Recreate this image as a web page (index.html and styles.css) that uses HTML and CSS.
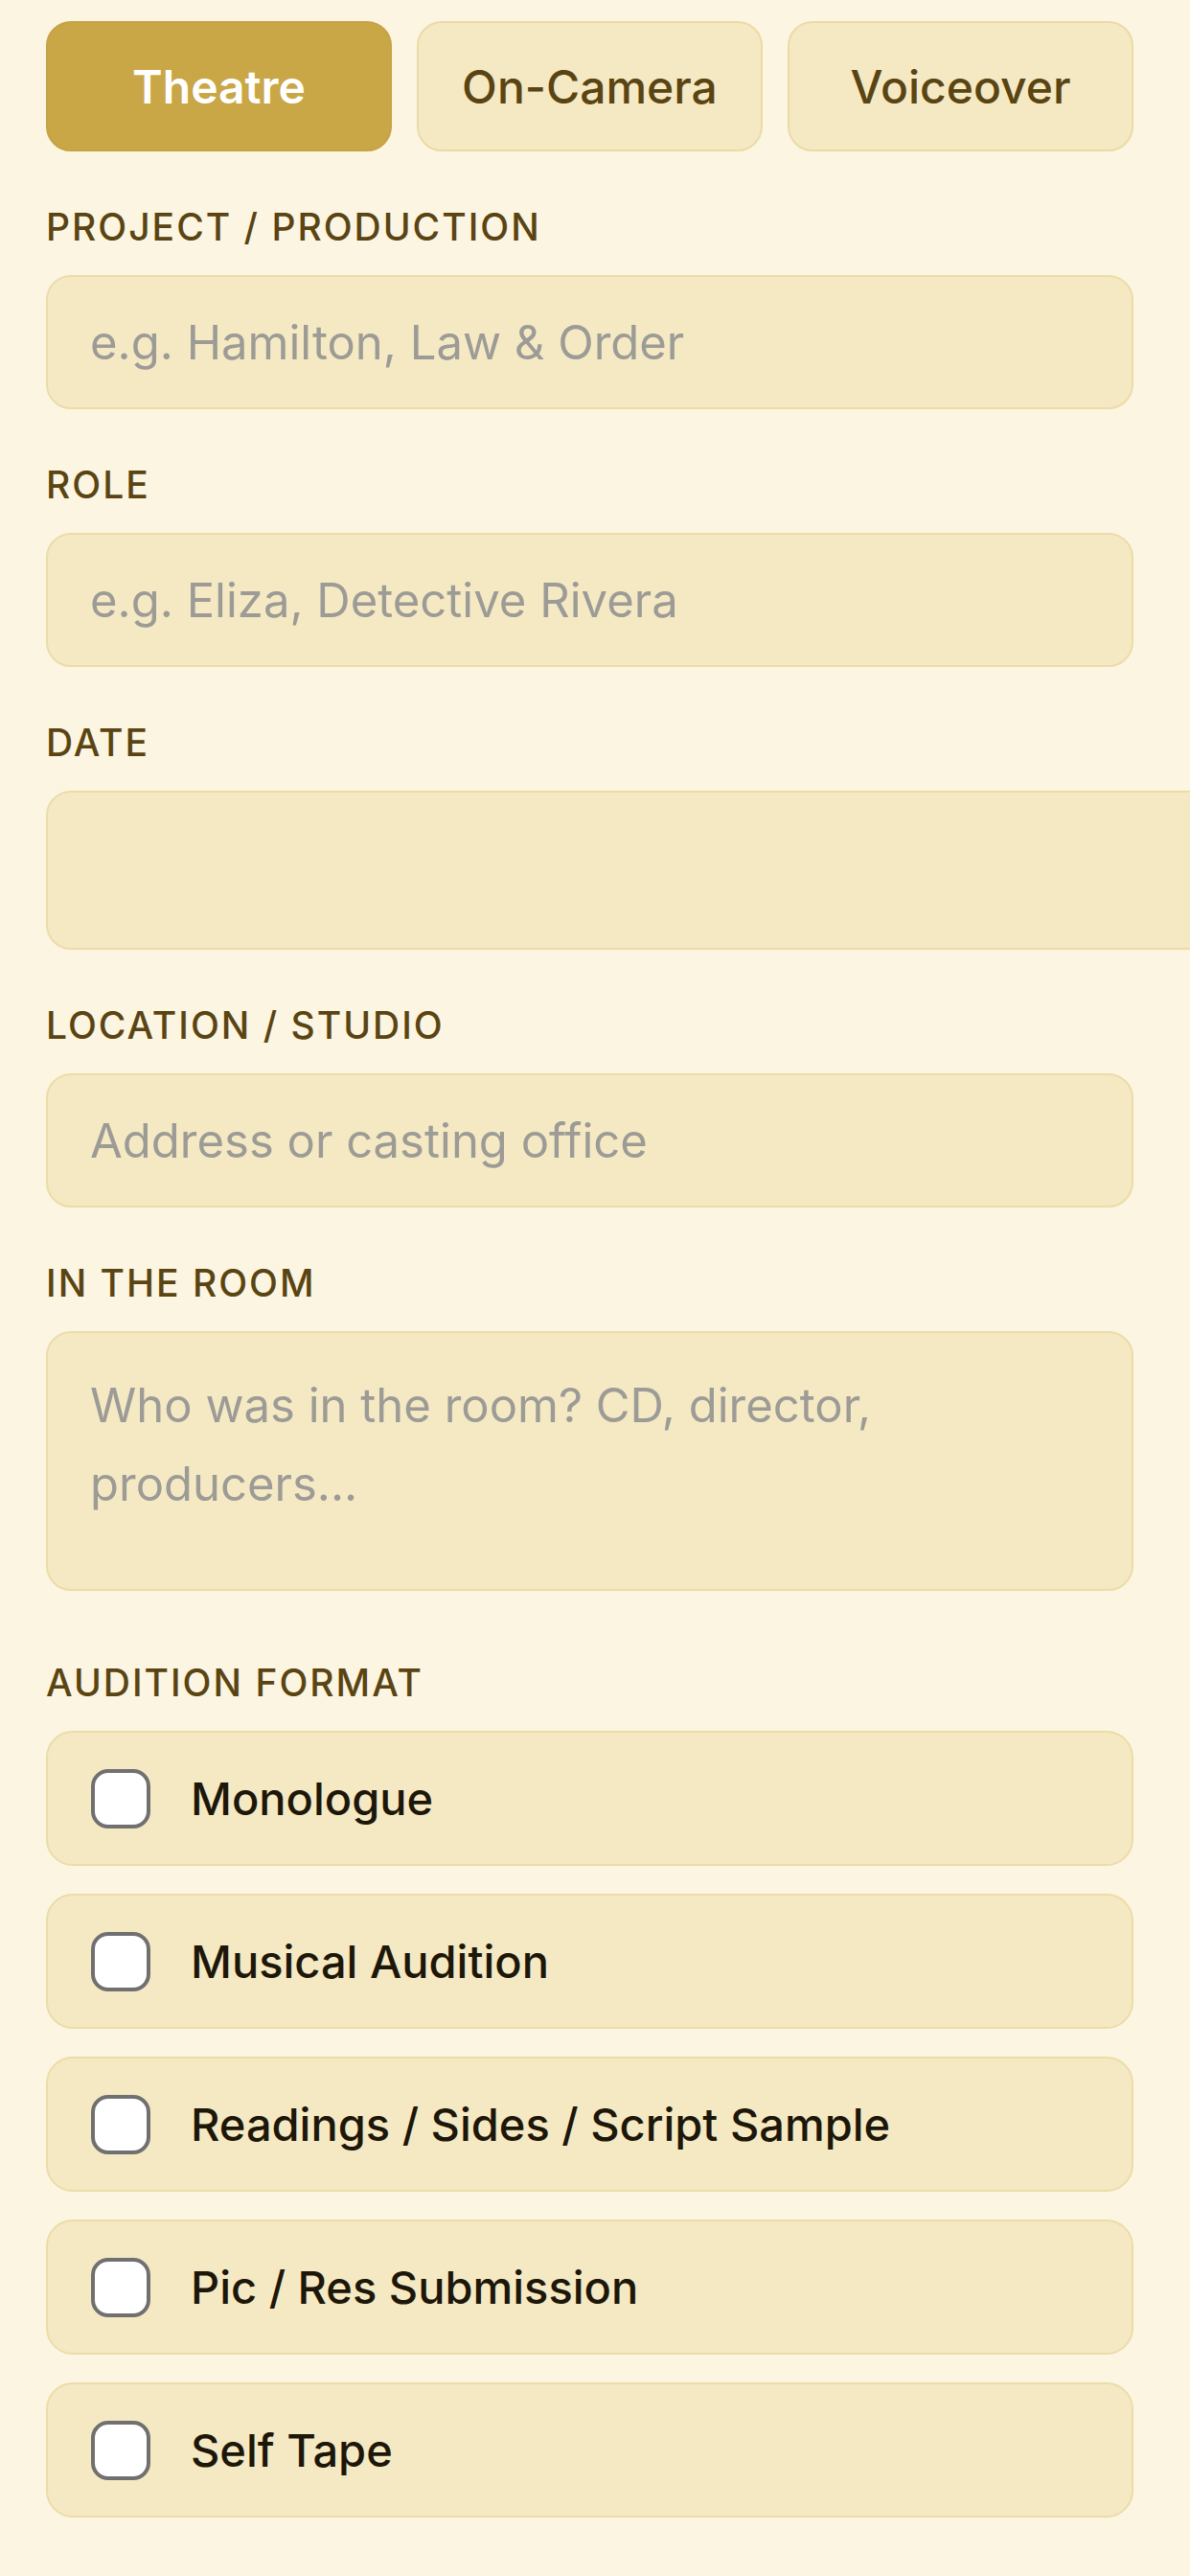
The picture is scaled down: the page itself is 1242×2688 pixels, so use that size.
FILE: index.html
```html
<!DOCTYPE html>
<html lang="en">
<head>
    <meta charset="UTF-8">
    <meta name="viewport" content="width=device-width, initial-scale=1.0">
    <title>New Audition</title>
    <link rel="stylesheet" href="styles.css">
</head>
<body>
    <form class="audition-form">
        <div class="tabs">
            <button type="button" class="tab active">Theatre</button>
            <button type="button" class="tab">On-Camera</button>
            <button type="button" class="tab">Voiceover</button>
        </div>

        <div class="field-group">
            <label class="field-label" for="project">PROJECT / PRODUCTION</label>
            <input class="field" id="project" type="text" placeholder="e.g. Hamilton, Law &amp; Order">
        </div>

        <div class="field-group">
            <label class="field-label" for="role">ROLE</label>
            <input class="field" id="role" type="text" placeholder="e.g. Eliza, Detective Rivera">
        </div>

        <div class="field-group">
            <label class="field-label" for="date">DATE</label>
            <input class="field date-field" id="date" type="date">
        </div>

        <div class="field-group">
            <label class="field-label" for="location">LOCATION / STUDIO</label>
            <input class="field" id="location" type="text" placeholder="Address or casting office">
        </div>

        <div class="field-group">
            <label class="field-label" for="room">IN THE ROOM</label>
            <textarea class="field notes" id="room" placeholder="Who was in the room? CD, director, producers..."></textarea>
        </div>

        <div class="field-group formats">
            <span class="field-label">AUDITION FORMAT</span>
            <div class="options">
                <label class="option"><input type="checkbox"><span>Monologue</span></label>
                <label class="option"><input type="checkbox"><span>Musical Audition</span></label>
                <label class="option"><input type="checkbox"><span>Readings / Sides / Script Sample</span></label>
                <label class="option"><input type="checkbox"><span>Pic / Res Submission</span></label>
                <label class="option"><input type="checkbox"><span>Self Tape</span></label>
            </div>
        </div>
    </form>
</body>
</html>
```

FILE: styles.css
```css
html, body {
    overflow-x: hidden;
}

body {
    margin: 0;
    padding: 22px 59px 60px 48px;
    background: #fcf5e2;
    font-family: Inter, 'Noto Sans', sans-serif;
    color: #1d1709;
}

.tabs {
    display: grid;
    grid-template-columns: repeat(3, 1fr);
    gap: 26px;
}

.tab {
    height: 136px;
    border: 2px solid #eadba6;
    border-radius: 26px;
    background: #f5e9c4;
    color: #5a4412;
    font-family: inherit;
    font-size: 48px;
    font-weight: 500;
    cursor: pointer;
}

.tab.active {
    background: #c9a646;
    border-color: #c6a343;
    color: #fff;
    font-weight: 600;
}

.field-group {
    margin-top: 57px;
}

.field-group.formats {
    margin-top: 74px;
}

.field-label {
    display: block;
    margin-bottom: 28px;
    font-size: 39px;
    line-height: 44px;
    font-weight: 500;
    letter-spacing: 2px;
    color: #5a4412;
}

.field {
    display: block;
    box-sizing: border-box;
    width: 100%;
    height: 140px;
    padding: 0 44px;
    border: 2px solid #ebdca8;
    border-radius: 26px;
    background: #f5e9c4;
    font-family: inherit;
    font-size: 49px;
    color: #1d1709;
    outline: none;
}

.field::placeholder {
    color: #9c9b95;
}

.date-field {
    width: calc(100% + 140px);
    height: 166px;
    border-radius: 26px 0 0 26px;
}

.date-field::-webkit-datetime-edit {
    color: transparent;
}

.date-field::-webkit-calendar-picker-indicator {
    display: none;
}

.notes {
    height: 271px;
    padding: 35px 44px;
    line-height: 82px;
    resize: none;
}

.options {
    display: flex;
    flex-direction: column;
    gap: 29px;
}

.option {
    display: flex;
    align-items: center;
    gap: 42px;
    height: 141px;
    box-sizing: border-box;
    padding: 0 45px;
    border: 2px solid #ebdca8;
    border-radius: 28px;
    background: #f5e9c4;
    font-size: 47px;
    font-weight: 500;
}

.option input {
    appearance: none;
    -webkit-appearance: none;
    flex-shrink: 0;
    width: 62px;
    height: 62px;
    margin: 0;
    border: 4px solid #707070;
    border-radius: 18px;
    background: #fff;
}
```
